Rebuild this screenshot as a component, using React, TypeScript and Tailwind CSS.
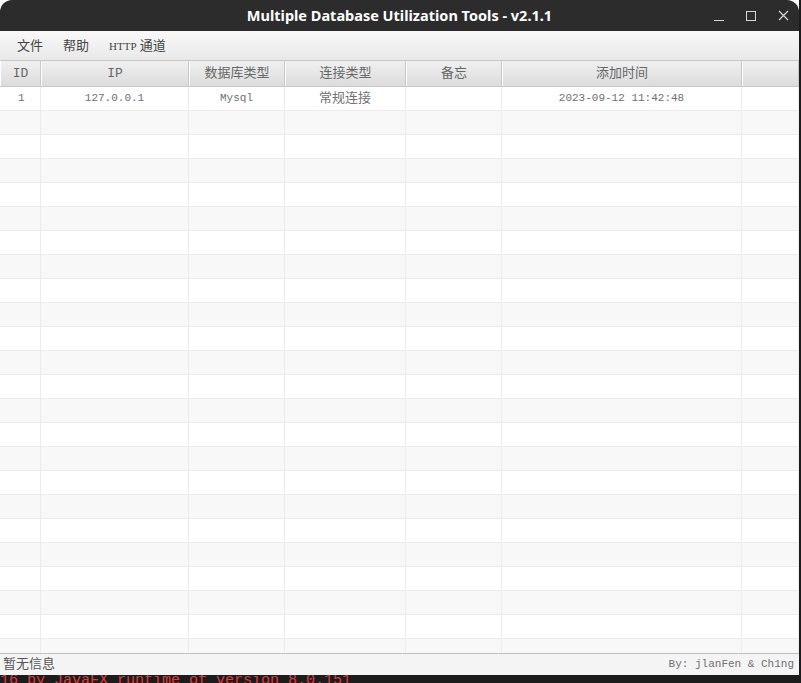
const columns = [
  { key: 'id', title: 'ID' },
  { key: 'ip', title: 'IP' },
  { key: 'db', title: '数据库类型' },
  { key: 'conn', title: '连接类型' },
  { key: 'memo', title: '备忘' },
  { key: 'time', title: '添加时间' },
  { key: 'pad', title: '' },
];

const data = [
  { id: '1', ip: '127.0.0.1', db: 'Mysql', conn: '常规连接', memo: '', time: '2023-09-12 11:42:48', pad: '' },
];

const gridCols = 'grid grid-cols-[41px_148px_96px_121px_96px_240px_1fr]';
const cellFont = { fontFamily: '"Liberation Mono", "Noto Sans CJK SC", monospace' };

function TitleBar() {
  return (
    <div className="relative flex h-[31px] items-center justify-center rounded-t-[12px] bg-[#2c2c2c]">
      <span
        className="text-[14.5px] font-bold text-white"
        style={{ fontFamily: '"Noto Sans", "Open Sans", sans-serif' }}
      >
        Multiple Database Utilization Tools - v2.1.1
      </span>
      <div className="absolute right-0 top-0 flex h-full items-center">
        <div className="flex w-[32px] justify-center">
          <div className="mt-[10px] h-[1px] w-[10px] bg-[#d8d8d8]" />
        </div>
        <div className="flex w-[32px] justify-center">
          <div className="h-[10px] w-[10px] border border-[#d8d8d8]" />
        </div>
        <div className="flex w-[32px] justify-center">
          <svg width="11" height="11" viewBox="0 0 11 11">
            <path d="M1 1L10 10M10 1L1 10" stroke="#d8d8d8" strokeWidth="1.2" />
          </svg>
        </div>
      </div>
    </div>
  );
}

function MenuBar() {
  return (
    <div
      className="flex h-[30px] items-center gap-[20px] border-b border-[#c6c6c6] bg-gradient-to-b from-[#f8f8f8] to-[#e9e9e9] pl-[17px] text-[13px] text-[#444]"
      style={{ fontFamily: '"Liberation Serif", "Noto Sans CJK SC", serif' }}
    >
      <span>文件</span>
      <span>帮助</span>
      <span>
        <span className="text-[11px]">HTTP</span> 通道
      </span>
    </div>
  );
}

function Header() {
  return (
    <div className={`${gridCols} h-[26px] border-b border-[#c8c8c8]`}>
      {columns.map((c) => (
        <div
          key={c.key}
          className="flex items-center justify-center border-r border-[#c8c8c8] border-l border-l-white bg-gradient-to-b from-[#f0f0f0] to-[#dcdcdc] text-[13px] text-[#666]"
          style={cellFont}
        >
          {c.title}
        </div>
      ))}
    </div>
  );
}

function Rows() {
  const rows = Array.from({ length: 24 }, (_, i) => data[i]);
  return (
    <div className="flex-1 overflow-hidden">
      {rows.map((row, i) => (
        <div
          key={i}
          className={`${gridCols} h-[24px] border-b border-[#ebebeb] ${i % 2 === 0 ? 'bg-white' : 'bg-[#f8f8f8]'}`}
        >
          {columns.map((c, ci) => (
            <div
              key={c.key}
              className={`flex items-center ${ci === 0 ? 'justify-start pl-[18px]' : 'justify-center'} border-r border-[#ebebeb] text-[#707070] ${c.key === 'conn' ? 'text-[13px]' : 'text-[11px]'}`}
              style={cellFont}
            >
              {row ? row[c.key as keyof typeof row] : ''}
            </div>
          ))}
        </div>
      ))}
    </div>
  );
}

function StatusBar() {
  return (
    <div
      className="flex h-[22px] items-center justify-between border-t border-[#c0c0c0] bg-[#f4f4f4] pl-[3px] pr-[5px]"
      style={cellFont}
    >
      <span className="text-[13px] text-[#555]">暂无信息</span>
      <span className="text-[11px] text-[#707070]">By: jlanFen &amp; Ch1ng</span>
    </div>
  );
}

export default function App() {
  return (
    <div className="flex h-[683px] w-[801px] flex-col overflow-hidden bg-[#1c1c1c]">
      <div className="flex h-[675px] w-[799px] flex-col bg-white">
        <TitleBar />
        <MenuBar />
        <Header />
        <Rows />
        <StatusBar />
      </div>
      <div className="h-[8px] overflow-hidden">
        <div
          className="-mt-[2px] whitespace-nowrap text-[15px] leading-[16px] text-[#e03a3a]"
          style={{ fontFamily: '"Liberation Mono", monospace' }}
        >
          16 by JavaFX runtime of version 8.0.151
        </div>
      </div>
    </div>
  );
}
